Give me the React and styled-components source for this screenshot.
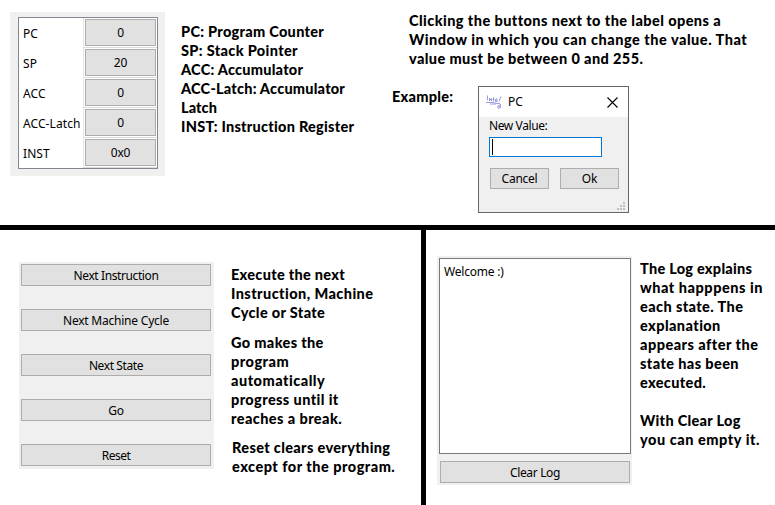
import React from "react";
import styled, { createGlobalStyle, css } from "styled-components";

const GlobalStyle = createGlobalStyle`
  * { box-sizing: border-box; }
  body { margin: 0; background: #fff; color: #000; overflow: hidden; }
`;

const uiFont = css`
  font-family: "Noto Sans", "Open Sans", sans-serif;
  font-size: 12px;
  line-height: 16px;
  white-space: nowrap;
`;

const Page = styled.main`
  width: 775px;
  height: 505px;
  display: grid;
  grid-template-rows: 225px 275px;
  row-gap: 5px;
  background: #000;
`;

const TopSection = styled.section`
  display: flex;
  align-items: flex-start;
  background: #fff;
`;

const BottomSections = styled.div`
  display: grid;
  grid-template-columns: 421px 349px;
  column-gap: 5px;
`;

const Section = styled.section`
  display: flex;
  align-items: flex-start;
  background: #fff;
`;

const RegisterPanel = styled.div`
  width: 155px;
  height: 164px;
  margin: 12px 0 0 10px;
  padding: 5px 7px 7px 8px;
  background: #f0f0f0;
`;

const RegisterTable = styled.div`
  height: 152px;
  border: 1px solid #828790;
  background: #fff;
  display: grid;
  grid-template-rows: repeat(5, 30px);
`;

const RegisterRow = styled.div`
  display: grid;
  grid-template-columns: 64px 74px;
`;

const RegisterName = styled.span`
  ${uiFont}
  padding: 8px 0 0 4px;
  letter-spacing: 0.08px;
`;

const RegisterCell = styled.div`
  padding: 1px;
  border-left: 1px solid #e4e4e4;
  border-bottom: 1px solid #dcdcdc;
`;

const Button = styled.button`
  ${uiFont}
  display: flex;
  align-items: center;
  justify-content: center;
  width: ${(p) => p.$width}px;
  height: ${(p) => p.$height}px;
  margin: 0;
  padding: ${(p) => (p.$low ? "2px" : "0")} 0 0;
  border: 1px solid #adadad;
  border-radius: 0;
  background: #e1e1e1;
  color: #000;
  letter-spacing: ${(p) => p.$track || 0}px;
`;

const Note = styled.p`
  margin: ${(p) => p.$margin || "0"};
  font: 900 14.5px/19px Lato, Carlito, sans-serif;
  font-variant-ligatures: none;
  white-space: nowrap;
`;

const Line = styled.span`
  display: block;
  min-height: 19px;
  letter-spacing: ${(p) => p.$track || 0}px;
`;

const Definitions = styled.div`
  width: 211px;
`;

const Example = styled.div`
  display: grid;
  grid-template-columns: 102px 151px;
  align-items: start;
`;

const Dialog = styled.div`
  width: 151px;
  height: 127px;
  margin-top: 18px;
  border: 1px solid #646769;
  background: #f0f0f0;
`;

const TitleBar = styled.header`
  ${uiFont}
  height: 30px;
  display: flex;
  align-items: center;
  padding: 0 10px 0 7px;
  background: #fff;
`;

const Title = styled.span`
  flex: 1;
  margin-left: 6px;
`;

const DialogBody = styled.div`
  height: 95px;
  padding: 1px 3px 2px 10px;
  display: flex;
  flex-direction: column;
`;

const FieldLabel = styled.label`
  ${uiFont}
  letter-spacing: -0.4px;
`;

const Field = styled.div`
  width: 113px;
  height: 20px;
  margin-top: 3px;
  padding: 1px 2px;
  border: 1px solid #0078d7;
  background: #fff;
`;

const Caret = styled.div`
  width: 1px;
  height: 16px;
  background: #000;
`;

const DialogActions = styled.div`
  display: flex;
  gap: 11px;
  margin: 11px 0 0 1px;
`;

const GripIcon = styled.svg`
  margin: 13px 0 0 auto;
  flex: none;
`;

const ControlPanel = styled.div`
  width: 195px;
  height: 207px;
  margin: 32px 0 0 19px;
  padding: 2px;
  display: flex;
  flex-direction: column;
  gap: 23px;
  background: #f0f0f0;
`;

const LogPanel = styled.div`
  width: 195px;
  height: 229px;
  margin: 26px 0 0 11px;
  padding: 2px 1px 2px 2px;
  background: #f0f0f0;
`;

const LogText = styled.div`
  ${uiFont}
  height: 196px;
  margin-bottom: 7px;
  padding: 5px 4px;
  border: 1px solid #7a7a7a;
  background: #fff;
  letter-spacing: -0.2px;
`;

const LogActions = styled.div`
  padding-left: 1px;
`;

const registers = [
  ["PC", "0"],
  ["SP", "20"],
  ["ACC", "0"],
  ["ACC-Latch", "0"],
  ["INST", "0x0"],
];

const controls = [
  ["Next Instruction", -0.4],
  ["Next Machine Cycle", -0.22],
  ["Next State", -0.4],
  ["Go", -0.2],
  ["Reset", -0.5],
];

function Paragraph({ lines, margin }) {
  return (
    <Note $margin={margin}>
      {lines.map(([text, track], i) => (
        <Line key={i} $track={track}>{text}</Line>
      ))}
    </Note>
  );
}

function AppIcon() {
  return (
    <svg width="16" height="16" viewBox="0 0 16 16" fill="none" stroke="#8484dc" strokeWidth="0.8">
      <path d="M1.500 1.500v5M3.500 7V4l2 3V4.500M7.500 3.500v4M6.500 5h2M9.500 6.500l2-.5-1-1.500-1 1v2h2M13 7.500l2-5" />
      <path d="M0 8.500h7l4 1h3M4 10h6" />
      <path d="M11.500 12l3-1.500v3l-2 1-1-1.500 3-.5" />
    </svg>
  );
}

export default function App() {
  return (
    <>
      <GlobalStyle />
      <Page>
        <TopSection>
          <RegisterPanel>
            <RegisterTable>
              {registers.map(([name, value]) => (
                <RegisterRow key={name}>
                  <RegisterName>{name}</RegisterName>
                  <RegisterCell>
                    <Button $width={71} $height={27} $track={-0.2}>{value}</Button>
                  </RegisterCell>
                </RegisterRow>
              ))}
            </RegisterTable>
          </RegisterPanel>
          <Definitions>
            <Paragraph
              margin="22px 0 0 16px"
              lines={[
                ["PC: Program Counter", 0.3],
                ["SP: Stack Pointer", 0.35],
                ["ACC: Accumulator", 0.24],
                ["ACC-Latch: Accumulator", 0.22],
                ["Latch", 0.1],
                ["INST: Instruction Register", 0.26],
              ]}
            />
          </Definitions>
          <div>
            <Paragraph
              margin="11px 0 0 33px"
              lines={[
                ["Clicking the buttons next to the label opens a", 0.42],
                ["Window in which you can change the value. That", 0.52],
                ["value must be between 0 and 255.", 0.4],
              ]}
            />
            <Example>
              <Paragraph margin="19px 0 0 16px" lines={[["Example:", 0.25]]} />
              <Dialog>
                <TitleBar>
                  <AppIcon />
                  <Title>PC</Title>
                  <svg width="11" height="11" viewBox="0 0 11 11" stroke="#000" strokeWidth="1.1">
                    <path d="M.5.5l10 10M10.500.5l-10 10" />
                  </svg>
                </TitleBar>
                <DialogBody>
                  <FieldLabel>New Value:</FieldLabel>
                  <Field><Caret /></Field>
                  <DialogActions>
                    <Button $width={59} $height={21} $track={-0.25}>Cancel</Button>
                    <Button $width={59} $height={21} $track={-0.2}>Ok</Button>
                  </DialogActions>
                  <GripIcon width="8" height="8" viewBox="0 0 8 8" fill="#bfbfbf">
                    <path d="M6 0h2v2H6zM3 3h2v2H3zM6 3h2v2H6zM0 6h2v2H0zM3 6h2v2H3zM6 6h2v2H6z" />
                  </GripIcon>
                </DialogBody>
              </Dialog>
            </Example>
          </div>
        </TopSection>
        <BottomSections>
          <Section>
            <ControlPanel>
              {controls.map(([label, track]) => (
                <Button key={label} $width={190} $height={22} $track={track} $low>{label}</Button>
              ))}
            </ControlPanel>
            <div>
              <Paragraph
                margin="35px 0 0 17px"
                lines={[["Execute the next", 0.3], ["Instruction, Machine", 0.43], ["Cycle or State", 0.35]]}
              />
              <Paragraph
                margin="11px 0 0 17px"
                lines={[
                  ["Go makes the", 0.35],
                  ["program", 0.5],
                  ["automatically", 0.5],
                  ["progress until it", 0.4],
                  ["reaches a break.", 0.42],
                ]}
              />
              <Paragraph
                margin="10px 0 0 18px"
                lines={[["Reset clears everything", 0.35], ["except for the program.", 0.5]]}
              />
            </div>
          </Section>
          <Section>
            <LogPanel>
              <LogText>Welcome :)</LogText>
              <LogActions>
                <Button $width={190} $height={22} $track={-0.35} $low>Clear Log</Button>
              </LogActions>
            </LogPanel>
            <Paragraph
              margin="29px 0 0 8px"
              lines={[
                ["The Log explains", 0.27],
                ["what happpens in", 0.53],
                ["each state. The", 0.4],
                ["explanation", 0.42],
                ["appears after the", 0.48],
                ["state has been", 0.4],
                ["executed.", 0.35],
                [""],
                ["With Clear Log", 0.3],
                ["you can empty it.", 0.55],
              ]}
            />
          </Section>
        </BottomSections>
      </Page>
    </>
  );
}
